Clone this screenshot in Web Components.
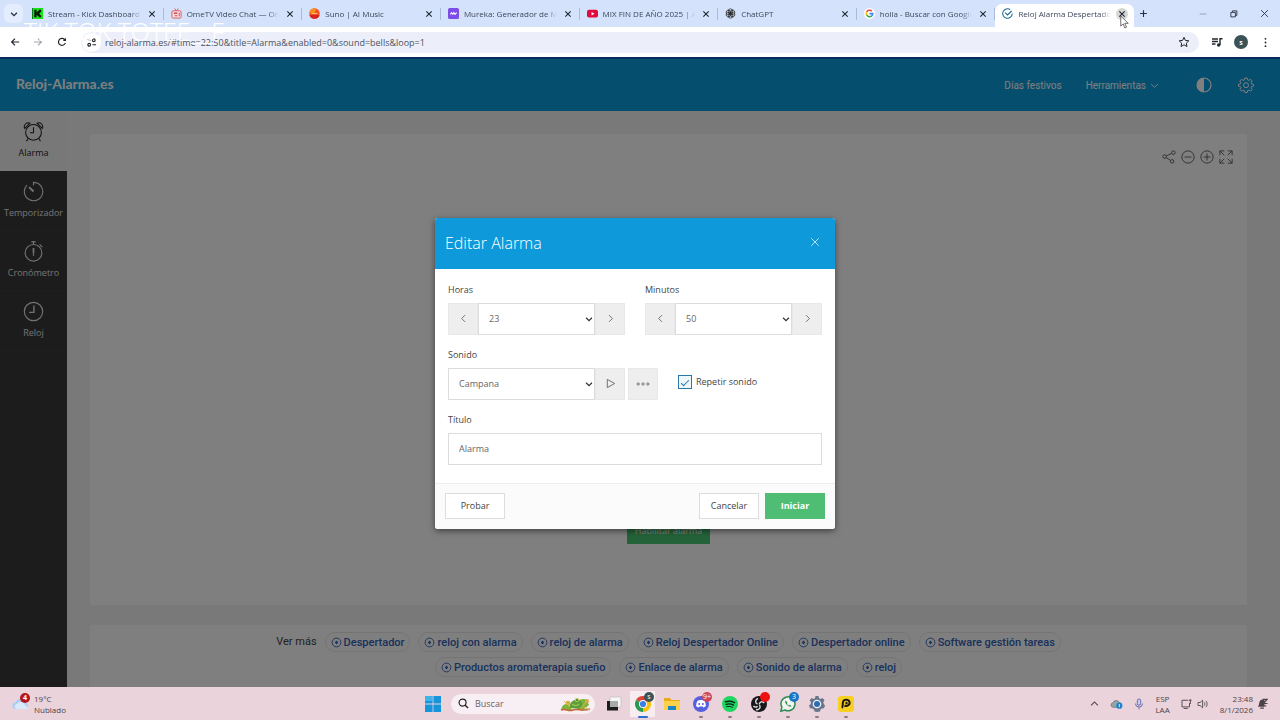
<!DOCTYPE html>
<html lang="es">
<head>
<meta charset="utf-8">
<title>Reloj Alarma Despertador</title>
<style>
  html, body { margin: 0; height: 100%; }
  body { font-family: "Open Sans", "Noto Sans", sans-serif; font-size: 9px; color: #333; overflow: hidden; }
</style>
</head>
<body>
<desktop-screen></desktop-screen>
<script>
const ICONS = {
  chevdown: ['0 0 12 12', '<path d="M2.5 4.5 6 8l3.5-3.5" fill="none" stroke="currentColor" stroke-width="1.5"/>'],
  chevthin: ['0 0 12 12', '<path d="M1.500 4 6 8.500 10.500 4" fill="none" stroke="currentColor" stroke-width="1.300"/>'],
  left: ['0 0 12 12', '<path d="M8 1.500 3.500 6 8 10.500" fill="none" stroke="currentColor" stroke-width="1.200"/>'],
  right: ['0 0 12 12', '<path d="M4 1.500 8.500 6 4 10.500" fill="none" stroke="currentColor" stroke-width="1.200"/>'],
  up: ['0 0 12 12', '<path d="M1.500 8.500 6 4l4.500 4.500" fill="none" stroke="currentColor" stroke-width="1.400"/>'],
  x: ['0 0 12 12', '<path d="m2 2 8 8M10 2l-8 8" fill="none" stroke="currentColor" stroke-width="1.600"/>'],
  xthin: ['0 0 12 12', '<path d="m1.500 1.500 9 9M10.500 1.500l-9 9" fill="none" stroke="currentColor" stroke-width="1.200"/>'],
  plus: ['0 0 12 12', '<path d="M6 1.500v9M1.500 6h9" fill="none" stroke="currentColor" stroke-width="1.500"/>'],
  min: ['0 0 12 12', '<path d="M2 6h8" stroke="currentColor" stroke-width="1"/>'],
  restore: ['0 0 12 12', '<path d="M2.500 4.500h6v6h-6zM4.500 4V2.500h6v6H9" fill="none" stroke="currentColor" stroke-width="1.200"/>'],
  back: ['0 0 12 12', '<path d="M11 6H2M6 2 2 6l4 4" fill="none" stroke="currentColor" stroke-width="1.400"/>'],
  fwd: ['0 0 12 12', '<path d="M1 6h9M6 2l4 4-4 4" fill="none" stroke="currentColor" stroke-width="1.400"/>'],
  reload: ['0 0 12 12', '<path d="M10 7a4.200 4.200 0 1 1-1-4l1.200 1.200" fill="none" stroke="currentColor" stroke-width="1.400"/><path d="M10.800 1v3.800H7z" fill="currentColor"/>'],
  tune: ['0 0 12 12', '<g fill="none" stroke="currentColor" stroke-width="1.200"><path d="M1 3.500h4M7 8.500h4"/><circle cx="8.500" cy="3.500" r="1.500"/><circle cx="3.500" cy="8.500" r="1.500"/></g>'],
  star: ['0 0 12 12', '<path d="m6 1.300 1.400 3.100 3.400.4-2.500 2.300.7 3.400-3-1.700-3 1.700.7-3.400L1.200 4.800l3.400-.4z" fill="none" stroke="currentColor" stroke-width="1"/>'],
  queue: ['0 0 12 12', '<path d="M1 3h6M1 5.500h6M1 8h3.500M9 9V2.800h2.500" fill="none" stroke="currentColor" stroke-width="1.400"/><circle cx="7.700" cy="9" r="1.700" fill="currentColor"/>'],
  dots: ['0 0 12 12', '<g fill="currentColor"><circle cx="6" cy="2" r="1"/><circle cx="6" cy="6" r="1"/><circle cx="6" cy="10" r="1"/></g>'],
  kick: ['0 0 12 12', '<path fill="#1be31b" d="M0 0h12v12H0z"/><path fill="#071" d="M0 0h1v12H0z"/><path fill="#071807" d="M2.500 2H5v2.500h1V3.200h1.300V2H10v2.600H8.600V6H7.500v.6h1.100V8H10v2H7.200V8.700H6V7.500H5V10H2.500z"/>'],
  ome: ['0 0 12 12', '<path d="M4 .5 6 3l2-2.500" fill="none" stroke="#d8555a"/><rect x="1" y="3" width="10" height="8" rx="1.500" fill="#f6dfe3" stroke="#d8555a"/><path d="M3 5h4v1.500H3zM4 8h3v1H4z" fill="#c64e55"/><path d="M9 5v4" stroke="#c64e55"/>'],
  suno: ['0 0 12 12', '<circle cx="6" cy="6" r="5.700" fill="#f4511e"/><path d="M.3 6A5.700 5.700 0 0 1 8 .7L6 6z" fill="#fb8c1e"/><path d="M.5 7.500h11A5.700 5.700 0 0 1 .5 7.500z" fill="#d9231f"/><path d="M3 6h6" stroke="#ffd8a8" stroke-width=".8"/>'],
  mureka: ['0 0 12 12', '<rect width="12" height="12" rx="2" fill="#7c4be8"/><path d="M2.500 7 4 5l1.300 2L6.500 5l1.200 2L9.500 5" fill="none" stroke="#fff" stroke-width="1.100"/>'],
  yt: ['0 0 12 12', '<rect y="2" width="12" height="8.400" rx="2.200" fill="#e00a3c"/><path d="m5 4.300 3.200 1.900L5 8.100z" fill="#fff"/>'],
  gpt: ['0 0 12 12', '<g fill="none" stroke="#222" stroke-width=".8"><ellipse cx="6" cy="3.800" rx="2.500" ry="2.900"/><ellipse cx="6" cy="3.800" rx="2.500" ry="2.900" transform="rotate(60 6 6)"/><ellipse cx="6" cy="3.800" rx="2.500" ry="2.900" transform="rotate(120 6 6)"/><ellipse cx="6" cy="3.800" rx="2.500" ry="2.900" transform="rotate(180 6 6)"/><ellipse cx="6" cy="3.800" rx="2.500" ry="2.900" transform="rotate(240 6 6)"/><ellipse cx="6" cy="3.800" rx="2.500" ry="2.900" transform="rotate(300 6 6)"/></g>'],
  google: ['0 0 12 12', '<circle cx="6" cy="6" r="6" fill="#fff"/><g fill="none" stroke-width="1.800"><path d="M8.500 3.500A3.500 3.500 0 0 0 3 4.200" stroke="#ea4335"/><path d="M3 4.200a3.500 3.500 0 0 0 0 3.600" stroke="#fbbc05"/><path d="M3 7.800a3.500 3.500 0 0 0 5.400.8" stroke="#34a853"/><path d="M8.400 8.600A3.500 3.500 0 0 0 9.500 6.200H6" stroke="#4285f4"/></g>'],
  clockfav: ['0 0 12 12', '<path d="M9 1.800A5.200 5.200 0 1 0 11.200 6" fill="none" stroke="#1c6a90" stroke-width="1.100"/><path d="M3.500 5 6 7.500l4.500-4.200" fill="none" stroke="#1c6a90" stroke-width="1.300"/>'],
  contrast: ['0 0 16 16', '<circle cx="8" cy="8" r="7" fill="none" stroke="currentColor" stroke-width="1.200"/><path d="M8 1a7 7 0 0 0 0 14z" fill="currentColor"/>'],
  gear: ['0 0 16 16', '<g fill="none" stroke="currentColor" stroke-width="1"><path d="M6.800 1h2.400l.4 1.900 1.300.5 1.600-1.100 1.700 1.700-1.100 1.600.5 1.300 1.900.4v1.800l-1.900.5-.5 1.200 1.100 1.700-1.700 1.700-1.600-1.100-1.300.5L9.200 15.500H6.800l-.4-1.900-1.300-.5-1.600 1.100-1.700-1.700 1.100-1.700-.5-1.200L.5 9.100V7.300l1.900-.4.5-1.300L1.800 4l1.700-1.700 1.600 1.100 1.300-.5z"/><circle cx="8" cy="8.200" r="2.500"/></g>'],
  alarm: ['0 0 24 24', '<g fill="none" stroke="currentColor" stroke-width="1.200"><circle cx="12" cy="13" r="9"/><path d="M12 7v6.500H8M6 20l-2 3M18 20l2 3M2 8.500C0 5 4 .5 8 2.500zM22 8.500c2-3.500-2-8-6-6z"/></g>'],
  timer: ['0 0 24 24', '<g fill="none" stroke="currentColor" stroke-width="1.300"><path d="M12 5V1.500A10.500 10.500 0 1 1 4.500 4.700"/><path d="m7 7 5 5" stroke-width="2.400"/></g>'],
  chrono: ['0 0 24 24', '<g fill="none" stroke="currentColor" stroke-width="1.300"><circle cx="12" cy="13.500" r="9.500"/><path d="M12 0v4M9.500 1h5M19 4l3 3"/><path d="M12 8v6" stroke-width="2"/><path d="M12 14v3"/></g>'],
  clock: ['0 0 24 24', '<g fill="none" stroke="currentColor" stroke-width="1.300"><circle cx="12" cy="12" r="10.500"/><path d="M12.500 5v8H7" stroke-width="1.600"/></g>'],
  share: ['0 0 16 16', '<g fill="none" stroke="currentColor" stroke-width="1"><circle cx="3" cy="7.500" r="2"/><circle cx="13" cy="3" r="2"/><circle cx="11.500" cy="13" r="2"/><path d="m5 6.700 6-2.800M4.700 8.700l5.200 3.200"/></g>'],
  cminus: ['0 0 16 16', '<g fill="none" stroke="currentColor"><circle cx="8" cy="8" r="7"/><path d="M4 8h8"/></g>'],
  cplus: ['0 0 16 16', '<g fill="none" stroke="currentColor"><circle cx="8" cy="8" r="7"/><path d="M4 8h8M8 4v8"/></g>'],
  full: ['0 0 16 16', '<path d="M1 6V1h5M1 1l5 5M10 1h5v5M15 1l-5 5M1 10v5h5M1 15l5-5M10 15h5v-5M15 15l-5-5" fill="none" stroke="currentColor"/>'],
  play: ['0 0 12 12', '<path d="M2.500 1.500 10.500 6l-8 4.500z" fill="none" stroke="currentColor" stroke-width="1"/>'],
  more: ['0 0 16 16', '<g fill="none" stroke="currentColor" stroke-width="1"><circle cx="2.500" cy="8" r="1.300"/><circle cx="8" cy="8" r="1.300"/><circle cx="13.500" cy="8" r="1.300"/></g>'],
  chip: ['0 0 12 12', '<circle cx="6" cy="6" r="4.800" fill="none" stroke="currentColor" stroke-width="1"/><path d="M6 3.800 7.800 6 6 8.200 4.200 6z" fill="currentColor"/>'],
  win: ['0 0 16 16', '<path fill="#1694dc" d="M0 0h7.600v7.600H0zM8.400 0H16v7.600H8.400zM0 8.400h7.600V16H0zM8.400 8.400H16V16H8.400z"/><path fill="#5cc8ef" d="M0 0h7.600v5H0z" opacity=".6"/>'],
  search: ['0 0 12 12', '<circle cx="5" cy="5" r="3.800" fill="none" stroke="currentColor" stroke-width="1.300"/><path d="m7.800 7.800 3.200 3.200" stroke="currentColor" stroke-width="1.500"/>'],
  frogs: ['0 0 32 18', '<path d="M1 15c1-5 4-7 8-6l3 6zM14 12c2-6 8-10 13-7l2 5-7 6z" fill="#7db53b"/><path d="M10 13c-1-5 3-9 8-8 5 0 6 6 3 9z" fill="#5f9f3a"/><circle cx="8" cy="8" r="2.300" fill="#d6b23c"/><circle cx="17" cy="5" r="2" fill="#a9cf52"/><circle cx="27" cy="6" r="2" fill="#dba03c"/><path d="M1 15c5-2 7 2 12 0s9 2 17-1" fill="none" stroke="#c4683a" stroke-width="1.500"/><path d="m4 6 6 6M20 14l8-9M24 12l6 3" stroke="#e0b75c"/><path d="M12 9c2 2 5 2 7 0" fill="none" stroke="#b6d96a"/><circle cx="17" cy="5" r=".8" fill="#222"/>'],
  taskview: ['0 0 16 16', '<path d="M4 1h11v10H4z" fill="#f5f5f5" stroke="#bbb" stroke-width=".6"/><path d="M1 5h3v6h8v3.500H1z" fill="#1c1c1f"/><path d="M4 5h8v6H4z" fill="#aaa"/>'],
  chrome: ['0 0 16 16', '<path d="M8 8 1.070 4A8 8 0 0 1 14.930 4z" fill="#db4437"/><path d="M8 8 14.930 4A8 8 0 0 1 8 16z" fill="#f4c20d"/><path d="M8 8v8A8 8 0 0 1 1.070 4z" fill="#2b9a50"/><circle cx="8" cy="8" r="4" fill="#fff"/><circle cx="8" cy="8" r="3.100" fill="#3c7de6"/>'],
  folder: ['0 0 16 16', '<path d="M0 2h6l1.500 2H16v10H0z" fill="#e9ac18"/><path d="M0 5h16v9H0z" fill="#fbd04a"/><path d="M4 10h8v4H4z" fill="#1b87c9"/>'],
  discord: ['0 0 16 16', '<circle cx="8" cy="8" r="8" fill="#5560e0"/><path d="M4.500 4.700c2-1 5-1 7 0 1 1.800 1.500 3.800 1.300 5.600-.8.700-1.700 1-2.500 1.200l-.6-1H6.300l-.6 1c-.8-.2-1.700-.5-2.500-1.200-.2-1.800.3-3.800 1.300-5.600z" fill="#fff"/><circle cx="6.200" cy="8" r="1" fill="#5560e0"/><circle cx="9.800" cy="8" r="1" fill="#5560e0"/>'],
  spotify: ['0 0 16 16', '<circle cx="8" cy="8" r="8" fill="#1fd660"/><g fill="none" stroke="#0a2614" stroke-linecap="round"><path d="M3.500 5.800c3-.8 6.500-.5 9 .9" stroke-width="1.500"/><path d="M4 8.300c2.500-.7 5.300-.4 7.500.8" stroke-width="1.300"/><path d="M4.500 10.600c2-.5 4.200-.3 6 .7"/></g>'],
  obs: ['0 0 16 16', '<circle cx="8" cy="8" r="8" fill="#17171a"/><g fill="none" stroke="#ddd" stroke-width="1.400"><path d="M7 2.500c-3 1-3 4.500-.5 5.500M13.300 7c-2-2.500-5-1-5 1.500M5 13.500c3 .8 5-1.500 3.500-4.500M2.500 10c1 1.500 3 1.500 4 .2"/></g>'],
  wa: ['0 0 16 16', '<path d="m.8 15.200 1.100-4A7 7 0 1 1 4.800 14z" fill="#f2f5ee" stroke="#2e8b57" stroke-width="1.500"/><path d="M5.500 4.500c-1 1.500.3 3.500 1.800 4.800s3 1.800 4.200.9l-1.700-1.500-1 .7c-.9-.4-1.500-1.200-1.900-2l.6-1z" fill="#2e8b57"/>'],
  settings: ['0 0 16 16', '<path d="M6.500 0h3l.5 2.300 1.500.7L13.500 2l2 2.300-1.200 2 .5 1.700 1.200 1.500-1 2.800-2.300.2-1.200 1.200L11 15.500 8 16l-2.500-.5-.5-2L3.500 12.500 1 12.300 0 9.500 1.700 8l.3-1.700L.7 4.200 2.600 2 4.800 3 6 2.300z" fill="#69758a"/><circle cx="8" cy="8" r="4.300" fill="#eef1f6"/><circle cx="8" cy="8" r="3" fill="#2a6db5"/>'],
  pear: ['0 0 16 16', '<rect width="16" height="16" rx="3" fill="#f7d023"/><path d="M4 12c1-1 .5-4 1-6 .7-2.700 5.500-3 6.500 0 .8 2.800-2.500 4.800-5 3.500" fill="none" stroke="#1c1a10" stroke-width="2"/><circle cx="8.500" cy="7" r="1.200" fill="#1c1a10"/>'],
  cloud: ['0 0 20 14', '<path d="M4 13a3.500 3.500 0 0 1 0-7 5.500 5.500 0 0 1 10.500-.5A4 4 0 0 1 15.500 13z" fill="#aecdf3"/><path d="M5 13a3 3 0 0 1 1-5.800 4.500 4.500 0 0 1 8 1L18 12l-2 1z" fill="#d9e9fb"/>'],
  onedrive: ['0 0 16 12', '<path d="M3.500 10a2.800 2.800 0 0 1 0-5.500 4.500 4.500 0 0 1 8-.5L14 6l-4 4z" fill="#9aa3a6" stroke="#59646a" stroke-width=".8"/><circle cx="11.500" cy="8" r="3.800" fill="#1b84cc"/><path d="M11.500 6v4" stroke="#fff"/>'],
  mic: ['0 0 12 14', '<rect x="4" y="1" width="4" height="7.500" rx="2" fill="#c9ccee" stroke="#5258a8"/><path d="M1.800 6.500a4.200 4.200 0 0 0 8.400 0M6 11v2.500" fill="none" stroke="#5258a8"/>'],
  net: ['0 0 14 12', '<path d="M8 1.500H1v8h9V5M3 11.500h5M9 1.500h3.500M11 .5v5.500" fill="none" stroke="currentColor" stroke-width="1.100"/>'],
  vol: ['0 0 14 12', '<path d="M1 4.200h2.500L6.500 1.500v9L3.500 7.800H1z" fill="none" stroke="currentColor"/><path d="M8.500 4c1 1.200 1 2.800 0 4M10.500 2.300c2 2.200 2 5.200 0 7.400" fill="none" stroke="currentColor"/>'],
  bell: ['0 0 12 12', '<path d="M1 9.500c1.500-1.500 1-4 2-6 1-2 4-2 5.500-.5l-.5 6.500z" fill="currentColor"/><path d="M6 1.500h5L7 6h4.500M3.500 11h4M10 8.500H8" fill="none" stroke="currentColor" stroke-width="1.300"/>'],
  cursor: ['0 0 12 18', '<path d="M1 1v13.500l3.300-3L6.500 17l2.200-1-2.300-5.200H11z" fill="#fff" stroke="#444" stroke-width="1"/>']
};

function define(name, html, setup) {
  const tpl = document.createElement('template');
  tpl.innerHTML = html;
  customElements.define(name, class extends HTMLElement {
    constructor() {
      super();
      this.attachShadow({ mode: 'open' }).append(tpl.content.cloneNode(true));
    }
    connectedCallback() { if (setup) setup(this, this.shadowRoot); }
  });
}

customElements.define('ui-icon', class extends HTMLElement {
  static observedAttributes = ['name', 'size'];
  constructor() {
    super();
    this.attachShadow({ mode: 'open' }).innerHTML =
      '<style>:host{display:inline-flex;flex:none}svg{display:block}</style><svg aria-hidden="true"></svg>';
  }
  attributeChangedCallback() {
    const icon = ICONS[this.getAttribute('name')];
    if (!icon) return;
    const [, , w, h] = icon[0].split(' ').map(Number);
    const size = Number(this.getAttribute('size')) || 12;
    const svg = this.shadowRoot.querySelector('svg');
    svg.setAttribute('viewBox', icon[0]);
    svg.setAttribute('width', size);
    svg.setAttribute('height', Math.round(size * h / w));
    svg.innerHTML = icon[1];
  }
});

/* ---------- browser chrome ---------- */
define('browser-tab', `<style>
  :host{display:flex;flex:1;min-width:0;align-items:center;gap:5px;box-sizing:border-box;height:23px;padding:0 6px 4px 7px;position:relative;font-size:8px;color:#3d4759}
  :host([active]){background:#fff;border-radius:7px 7px 0 0}
  :host([active]) button{background:#d5d8d2}
  :host(:not([active]))::after{content:"";position:absolute;right:0;top:4px;width:1px;height:12px;background:#a9bcdc}
  span{flex:1;min-width:0;overflow:hidden;white-space:nowrap;-webkit-mask-image:linear-gradient(90deg,#000 88%,transparent)}
  button{border:0;background:none;padding:2px;border-radius:50%;color:#1b2433;display:flex}
  </style><ui-icon size="11"></ui-icon><span><slot></slot></span><button aria-label="Cerrar pestaña"><ui-icon name="x" size="8"></ui-icon></button>`,
  (el, root) => root.querySelector('ui-icon').setAttribute('name', el.getAttribute('icon')));

define('tab-strip', `<style>
  :host{display:grid;grid-template-columns:25px 1fr 146px;align-items:end;height:27px;background:#d5e2fb}
  .tabs{display:flex;min-width:0}
  button{border:0;background:none;padding:0;display:flex;color:#28303e;align-items:center;justify-content:center}
  .list{width:19px;height:19px;border-radius:6px;background:#e4edfd;margin:0 0 4px 4px}
  .ctl{display:grid;grid-template-columns:18px 1fr 30px 30px 32px;height:27px;align-items:center}
  .dim{color:#8b96aa}
  </style>
  <button class="list" aria-label="Buscar pestañas"><ui-icon name="chevdown" size="10"></ui-icon></button>
  <div class="tabs">
    <browser-tab icon="kick">Stream - Kick Dashboard</browser-tab>
    <browser-tab icon="ome">OmeTV Video Chat — Om</browser-tab>
    <browser-tab icon="suno">Suno | AI Music</browser-tab>
    <browser-tab icon="mureka">Mureka: Generador de M</browser-tab>
    <browser-tab icon="yt">MIX FIN DE AÑO 2025 | A</browser-tab>
    <browser-tab icon="gpt">ChatGPT</browser-tab>
    <browser-tab icon="google">holla - Buscar con Google</browser-tab>
    <browser-tab icon="clockfav" active>Reloj Alarma Despertador</browser-tab>
  </div>
  <div class="ctl">
    <button aria-label="Nueva pestaña"><ui-icon name="plus" size="9"></ui-icon></button><i></i>
    <button class="dim" aria-label="Minimizar"><ui-icon name="min" size="10"></ui-icon></button>
    <button aria-label="Restaurar"><ui-icon name="restore" size="9"></ui-icon></button>
    <button aria-label="Cerrar"><ui-icon name="xthin" size="9"></ui-icon></button>
  </div>`);

define('browser-toolbar', `<style>
  :host{display:flex;align-items:center;box-sizing:border-box;height:32px;padding:0 3px 0 5px;background:#fff;border-bottom:2px solid #0a2a5c}
  button{border:0;background:none;padding:0;width:24px;height:20px;display:flex;align-items:center;justify-content:center;color:#20262f;flex:none}
  .back{width:20px}.off{color:#a0a5ad;width:26px}.re{width:22px}
  .omni{flex:1;display:flex;align-items:center;height:21px;margin:0 6px 0 8px;border-radius:11px;background:#eceffa}
  .omni>button:last-child{width:30px}
  .site{width:19px;height:19px;border-radius:50%;background:#fff;margin-left:1px}
  input{flex:1;border:0;background:none;outline:0;padding:0;margin-left:4px;font:9px "Open Sans",sans-serif;color:#4b5260}
  .me{width:14px;height:14px;border-radius:50%;background:#3b5257;color:#fff;font:bold 7px "Open Sans",sans-serif;margin:0 5px}
  </style>
  <button class="back" aria-label="Atrás"><ui-icon name="back" size="10"></ui-icon></button>
  <button class="off" aria-label="Adelante"><ui-icon name="fwd" size="10"></ui-icon></button>
  <button class="re" aria-label="Recargar"><ui-icon name="reload" size="10"></ui-icon></button>
  <div class="omni"><button class="site" aria-label="Información del sitio"><ui-icon name="tune" size="11"></ui-icon></button>
    <input aria-label="Dirección" value="reloj-alarma.es/#time=22:50&amp;title=Alarma&amp;enabled=0&amp;sound=bells&amp;loop=1">
    <button aria-label="Favorito"><ui-icon name="star" size="12"></ui-icon></button></div>
  <button aria-label="Multimedia"><ui-icon name="queue" size="12"></ui-icon></button>
  <button class="me" aria-label="Perfil">s</button>
  <button aria-label="Menú"><ui-icon name="dots" size="11"></ui-icon></button>`);

/* ---------- web page ---------- */
define('site-header', `<style>
  :host{display:flex;align-items:center;box-sizing:border-box;height:52px;padding:0 26px 0 16px;background:#0a9cdb;color:#fff;font-size:10px}
  a{color:inherit;text-decoration:none;display:flex;align-items:center;gap:4px}
  .logo{font:bold 14px Lato,sans-serif;margin-right:auto;padding-bottom:3px}
  nav{display:flex;gap:24px;font-family:Roboto,sans-serif}
  button{border:0;background:none;padding:0;color:inherit;display:flex;margin-left:26px}
  .first{margin-left:37px}
  </style><a class="logo" href="#">Reloj-Alarma.es</a>
  <nav><a href="#">Días festivos</a><a href="#">Herramientas <ui-icon name="chevthin" size="9"></ui-icon></a></nav>
  <button class="first" aria-label="Modo nocturno"><ui-icon name="contrast" size="16"></ui-icon></button>
  <button aria-label="Ajustes"><ui-icon name="gear" size="16"></ui-icon></button>`);

define('side-item', `<style>
  :host{display:block}
  a{display:flex;flex-direction:column;align-items:center;gap:4px;box-sizing:border-box;height:60px;padding-top:10px;color:#e4e4e4;text-decoration:none;font-size:9px;line-height:14px;border-bottom:1px solid #3e3e3e}
  :host([active]) a{background:#f0f0f0;color:#222;border-color:#f0f0f0}
  </style><a href="#"><ui-icon size="21"></ui-icon><slot></slot></a>`,
  (el, root) => root.querySelector('ui-icon').setAttribute('name', el.getAttribute('icon')));

define('chip-link', `<style>
  :host{display:block}
  a{display:flex;align-items:center;gap:2px;box-sizing:border-box;height:20px;padding:0 5px;border:1px solid #e8e8e8;border-radius:10px;color:#3263b8;text-decoration:none;font:500 11px Roboto,sans-serif}
  </style><a href="#"><ui-icon name="chip" size="11"></ui-icon><slot></slot></a>`);

define('clock-card', `<style>
  :host{display:flex;flex-direction:column;justify-content:space-between;align-items:center;flex:1;box-sizing:border-box;padding:16px 14px 61px;background:#fff;border-radius:2px}
  .tools{display:flex;gap:5px;align-self:flex-end}
  button{border:0;padding:0;background:none;color:#555;display:flex}
  .enable{height:27px;padding:0 8px;background:#48c774;color:#fff;font:9px "Open Sans",sans-serif;align-items:center}
  </style>
  <div class="tools"><button aria-label="Compartir"><ui-icon name="share" size="14"></ui-icon></button><button aria-label="Reducir"><ui-icon name="cminus" size="14"></ui-icon></button><button aria-label="Ampliar"><ui-icon name="cplus" size="14"></ui-icon></button><button aria-label="Pantalla completa"><ui-icon name="full" size="14"></ui-icon></button></div>
  <button class="enable">Habilitar alarma</button>`);

define('more-links', `<style>
  :host{display:block;box-sizing:border-box;padding:7px 0 10px;background:#fff;border-radius:2px;font:11px/20px Roboto,sans-serif;color:#444}
  div{display:flex;flex-wrap:wrap;justify-content:center;gap:5px 8px;max-width:800px;margin:0 auto}
  </style><div><span>Ver más</span><slot></slot></div>`);

define('alarm-page', `<style>
  :host{display:flex;flex-direction:column;height:100%}
  .row{display:flex;flex:1;min-height:0}
  aside{width:67px;flex:none;background:#383838}
  main{flex:1;min-width:0;display:flex;flex-direction:column;gap:20px;box-sizing:border-box;padding:23px 33px 0 23px;background:#f2f2f2}
  </style><site-header></site-header>
  <div class="row"><aside>
    <side-item icon="alarm" active>Alarma</side-item><side-item icon="timer">Temporizador</side-item>
    <side-item icon="chrono">Cronómetro</side-item><side-item icon="clock">Reloj</side-item></aside>
  <main><clock-card></clock-card>
    <more-links><chip-link>Despertador</chip-link><chip-link>reloj con alarma</chip-link><chip-link>reloj de alarma</chip-link><chip-link>Reloj Despertador Online</chip-link><chip-link>Despertador online</chip-link><chip-link>Software gestión tareas</chip-link><chip-link>Productos aromaterapia sueño</chip-link><chip-link>Enlace de alarma</chip-link><chip-link>Sonido de alarma</chip-link><chip-link>reloj</chip-link></more-links></main></div>`);

/* ---------- dialog ---------- */
const FIELD = `
  label{display:block;font-size:9px;line-height:14px;color:#444}
  .group{display:flex;height:32px;margin-top:6px}
  .pick{flex:1;position:relative;display:flex}
  .pick ui-icon{position:absolute;right:1px;top:11px;color:#333;pointer-events:none}
  select,input[type=text]{flex:1;min-width:0;box-sizing:border-box;appearance:none;border:1px solid #dcdcdc;border-radius:0;background:#fff;padding:0 10px;font:9px "Open Sans",sans-serif;color:#666;outline:0}
  .group button{width:30px;flex:none;padding:0;border:1px solid #e8e8e8;background:#eee;color:#666;display:flex;align-items:center;justify-content:center}`;

define('step-select', `<style>:host{display:block}${FIELD}</style>
  <label for="s"></label><div class="group"><button aria-label="Anterior"><ui-icon name="left" size="9"></ui-icon></button>
  <div class="pick"><select id="s"><option></option></select><ui-icon name="chevdown" size="10"></ui-icon></div>
  <button aria-label="Siguiente"><ui-icon name="right" size="9"></ui-icon></button></div>`, (el, root) => {
  root.querySelector('label').textContent = el.getAttribute('label');
  root.querySelector('option').textContent = el.getAttribute('value');
});

define('alarm-dialog', `<style>
  ${FIELD}
  :host{display:flex;flex-direction:column;width:400px;max-width:100%;background:#fff;border-radius:3px;overflow:hidden;box-shadow:0 2px 6px rgba(0,0,0,.5)}
  header{display:flex;justify-content:space-between;align-items:center;height:51px;box-sizing:border-box;padding:0 15px 0 10px;background:#0d99da;color:#fff}
  h2{margin:0;font-size:16px;font-weight:300}
  header button{border:0;padding:0 0 3px;background:none;color:#b9e2f6;display:flex}
  form{display:grid;gap:13px;padding:14px 13px 18px}
  .two{display:grid;grid-template-columns:1fr 1fr;gap:20px}
  .pick{flex:none;width:147px}
  .group .more{margin-left:3px}
  .check{display:flex;align-items:center;gap:4px;height:28px;margin-left:20px}
  input[type=checkbox]{appearance:none;margin:0;width:14px;height:14px;border:1px solid #2b77a5;background:#eef7fc;display:grid;place-items:center}
  input[type=checkbox]:checked::before{content:"";width:7px;height:3px;border:solid #2b77a5;border-width:0 0 1px 1px;transform:rotate(-45deg)}
  footer{display:flex;gap:6px;box-sizing:border-box;height:46px;padding:9px 10px 10px;border-top:1px solid #eee;background:#fbfbfb}
  footer button{width:60px;padding:0;border:1px solid #ddd;background:#fff;font:9px "Open Sans",sans-serif;color:#444}
  footer .test{margin-right:auto}
  footer .go{background:#4fbe74;border-color:#4fbe74;color:#fff;font-weight:700}
  </style>
  <header><h2>Editar Alarma</h2><button aria-label="Cerrar"><ui-icon name="xthin" size="10"></ui-icon></button></header>
  <form>
    <div class="two"><step-select label="Horas" value="23"></step-select><step-select label="Minutos" value="50"></step-select></div>
    <div><label for="snd">Sonido</label><div class="group">
      <div class="pick"><select id="snd"><option>Campana</option></select><ui-icon name="chevdown" size="10"></ui-icon></div>
      <button type="button" aria-label="Reproducir"><ui-icon name="play" size="11"></ui-icon></button>
      <button type="button" class="more" aria-label="Más"><ui-icon name="more" size="14"></ui-icon></button>
      <label class="check"><input type="checkbox" checked>Repetir sonido</label></div></div>
    <div><label for="ttl">Título</label><div class="group"><input id="ttl" type="text" value="Alarma"></div></div>
  </form>
  <footer><button class="test">Probar</button><button>Cancelar</button><button class="go">Iniciar</button></footer>`);

/* ---------- taskbar ---------- */
define('task-app', `<style>
  :host{display:flex;width:29px;height:29px;position:relative;align-items:center;justify-content:center}
  :host([active]){background:linear-gradient(#f7ecf0,#f7ecf0) center/25px 26px no-repeat}
  :host([run])::after{content:"";position:absolute;bottom:0;width:4px;height:2px;border-radius:1px;background:#8a7d84}
  :host([active])::after{content:"";position:absolute;bottom:0;width:10px;height:2px;border-radius:1px;background:#2b6fd0}
  button{border:0;background:none;padding:0;display:flex}
  b{position:absolute;right:3px;top:3px;min-width:10px;height:10px;border-radius:5px;color:#fff;font:7px/10px "Open Sans",sans-serif;text-align:center}
  b:empty{display:none}
  </style><button><ui-icon size="16"></ui-icon></button><b></b>`, (el, root) => {
  root.querySelector('ui-icon').setAttribute('name', el.getAttribute('icon'));
  root.querySelector('button').setAttribute('aria-label', el.getAttribute('icon'));
  const b = root.querySelector('b');
  b.textContent = el.getAttribute('badge') || '';
  b.style.background = el.getAttribute('tone') || 'none';
});

define('task-bar', `<style>
  :host{display:grid;grid-template-columns:1fr auto 1fr;align-items:center;height:33px;background:#ead3db;font-size:8px;line-height:10px;color:#4c4348}
  .w{display:flex;align-items:center;gap:4px;padding-left:12px;position:relative}
  .w b{position:absolute;left:20px;top:0;width:10px;height:10px;border-radius:50%;background:#b3161f;color:#fff;font-size:7px;text-align:center}
  .mid{display:flex;align-items:center;padding-left:5px}
  .win{border:0;background:none;padding:0;display:flex;margin-right:10px}
  .find{display:flex;align-items:center;gap:6px;box-sizing:border-box;width:144px;height:20px;padding:0 3px 0 7px;border-radius:10px;background:#f7eff3;margin-right:4px;color:#222}
  input{flex:1;min-width:0;border:0;background:none;padding:0;font:9px "Open Sans",sans-serif;outline:0}
  input::placeholder{color:#6b6368}
  .tray{display:flex;align-items:center;justify-content:flex-end;padding-right:12px}
  .tray>*{margin-left:11px}.tray .near{margin-left:4px}.r{text-align:right}.c{text-align:center;line-height:11px}
  .line{line-height:11px}
  </style>
  <div class="w"><ui-icon name="cloud" size="18"></ui-icon><b>4</b><div class="line">19°C<br>Nublado</div></div>
  <div class="mid"><button class="win" aria-label="Inicio"><ui-icon name="win" size="16"></ui-icon></button>
    <div class="find"><ui-icon name="search" size="11"></ui-icon><input aria-label="Buscar" placeholder="Buscar"><ui-icon name="frogs" size="32"></ui-icon></div>
    <task-app icon="taskview"></task-app><task-app icon="chrome" active badge="s" tone="#3b5257"></task-app><task-app icon="folder"></task-app>
    <task-app icon="discord" run badge="9+" tone="#d04558"></task-app><task-app icon="spotify" run></task-app><task-app icon="obs" run badge="&nbsp;" tone="#ee1111"></task-app>
    <task-app icon="wa" run badge="3" tone="#1976c5"></task-app><task-app icon="settings" run></task-app><task-app icon="pear" run></task-app></div>
  <div class="tray"><ui-icon name="up" size="9"></ui-icon><ui-icon name="onedrive" size="13"></ui-icon><ui-icon name="mic" size="10"></ui-icon>
    <div class="c">ESP<br>LAA</div><ui-icon name="net" size="12"></ui-icon><ui-icon class="near" name="vol" size="12"></ui-icon>
    <div class="r line">23:48<br>8/1/2026</div><ui-icon class="near" name="bell" size="11"></ui-icon></div>`);

define('desktop-screen', `<style>
  :host{display:flex;flex-direction:column;height:100vh;position:relative;overflow:hidden}
  .view{flex:1;min-height:0;position:relative;overflow:hidden}
  .veil{position:absolute;inset:0;display:flex;align-items:center;justify-content:center;padding-right:10px;background:rgba(0,0,0,.5)}
  .mark{position:absolute;left:24px;top:16px;font:300 25px/30px "Open Sans",sans-serif;color:#fff;white-space:nowrap;pointer-events:none}
  .ptr{position:absolute;left:calc(100% - 160px);top:15px}
  </style>
  <tab-strip></tab-strip><browser-toolbar></browser-toolbar>
  <div class="view"><alarm-page></alarm-page><div class="veil"><alarm-dialog role="dialog" aria-label="Editar Alarma"></alarm-dialog></div></div>
  <task-bar></task-bar>
  <div class="mark">TIK TOK TOTEE__F</div><ui-icon class="ptr" name="cursor" size="9"></ui-icon>`);
</script>
</body>
</html>
